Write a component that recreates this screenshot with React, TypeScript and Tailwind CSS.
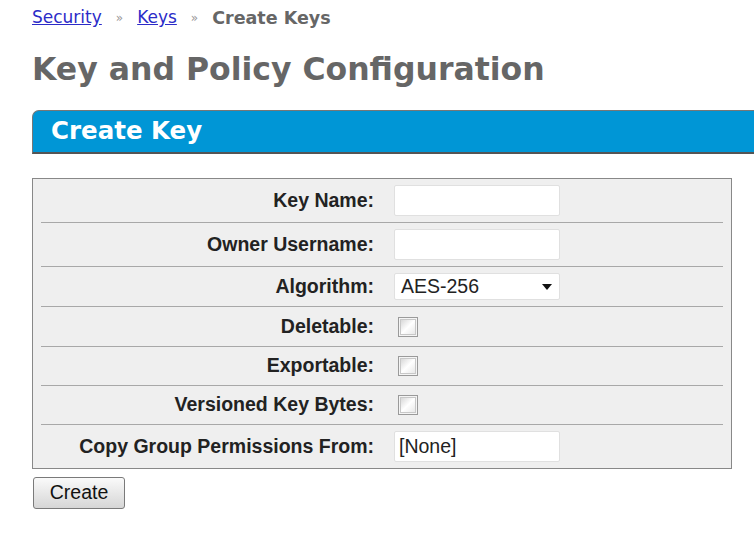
import React from 'react';

const verdana = { fontFamily: '"DejaVu Sans", Verdana, sans-serif' };
const arial = { fontFamily: '"Liberation Sans", Arial, sans-serif' };

type Row = { label: string; kind: 'text' | 'select' | 'check'; value?: string; h: string };

const rows: Row[] = [
  { label: 'Key Name:', kind: 'text', h: 'h-[44px]' },
  { label: 'Owner Username:', kind: 'text', h: 'h-[44px]' },
  { label: 'Algorithm:', kind: 'select', value: 'AES-256', h: 'h-[40px]' },
  { label: 'Deletable:', kind: 'check', h: 'h-[40px]' },
  { label: 'Exportable:', kind: 'check', h: 'h-[39px]' },
  { label: 'Versioned Key Bytes:', kind: 'check', h: 'h-[39px]' },
  { label: 'Copy Group Permissions From:', kind: 'text', value: '[None]', h: 'h-[43px]' },
];

const Field: React.FC<{ row: Row }> = ({ row }) => {
  if (row.kind === 'check') {
    return (
      <span className="ml-[4px] flex h-[20px] w-[20px] items-center justify-center border border-[#9a9a9a] bg-[#f4f4f4]">
        <span className="h-[16px] w-[16px] border border-[#c8c8c8] bg-gradient-to-br from-[#d8d8d8] via-white to-[#e8e8e8]" />
      </span>
    );
  }
  if (row.kind === 'select') {
    return (
      <div className="flex h-[27px] w-[166px] items-center justify-between rounded-[2px] border border-[#e0e0e0] bg-white pl-[6px] pr-[7px] text-[19.5px] text-[#222]">
        <span>{row.value}</span>
        <svg width="10" height="6" viewBox="0 0 10 6">
          <path d="M0 0 L10 0 L5 6 Z" fill="#111" />
        </svg>
      </div>
    );
  }
  return (
    <div className="flex h-[31px] w-[166px] items-center rounded-[2px] border border-[#e0e0e0] bg-white px-[4px] text-[19.5px] text-[#222]">
      {row.value}
    </div>
  );
};

export default function App() {
  return (
    <div className="min-h-[538px] w-[754px] overflow-hidden bg-white pl-[32px]">
      <div className="flex h-[20px] items-center gap-[14px] mt-[8px] text-[17px]" style={verdana}>
        <a className="text-[#2b2bc8] underline">Security</a>
        <span className="text-[12px] text-[#999]">»</span>
        <a className="text-[#2b2bc8] underline">Keys</a>
        <span className="text-[12px] text-[#999]">»</span>
        <span className="text-[17.5px] font-bold text-[#666]">Create Keys</span>
      </div>

      <h1 className="mt-[22px] text-[31.5px] font-bold leading-[38px] text-[#666]" style={verdana}>
        Key and Policy Configuration
      </h1>

      <div className="mt-[22px] flex h-[44px] items-center rounded-tl-[7px] border-t border-b-2 border-l border-t-[#777] border-b-[#555] border-l-[#777] bg-[#0096d6] pl-[18px]">
        <span className="text-[24.5px] font-bold text-white" style={verdana}>
          Create Key
        </span>
      </div>

      <div className="mt-[24px] w-[700px] border border-[#888] bg-[#efefef] px-[8px]" style={arial}>
        {rows.map((row, i) => (
          <div
            key={row.label}
            className={`flex items-center ${row.h} ${i < rows.length - 1 ? 'border-b border-[#a8a8a8]' : ''}`}
          >
            <div className="w-[333px] text-right text-[19.5px] font-bold text-[#222]">{row.label}</div>
            <div className="ml-[20px]">
              <Field row={row} />
            </div>
          </div>
        ))}
      </div>

      <button
        className="mt-[8px] ml-[1px] h-[32px] w-[92px] rounded-[3px] border border-[#7a7a7a] bg-gradient-to-b from-[#fafafa] to-[#d6d6d6] text-[19.5px] text-[#111]"
        style={arial}
      >
        Create
      </button>
    </div>
  );
}
